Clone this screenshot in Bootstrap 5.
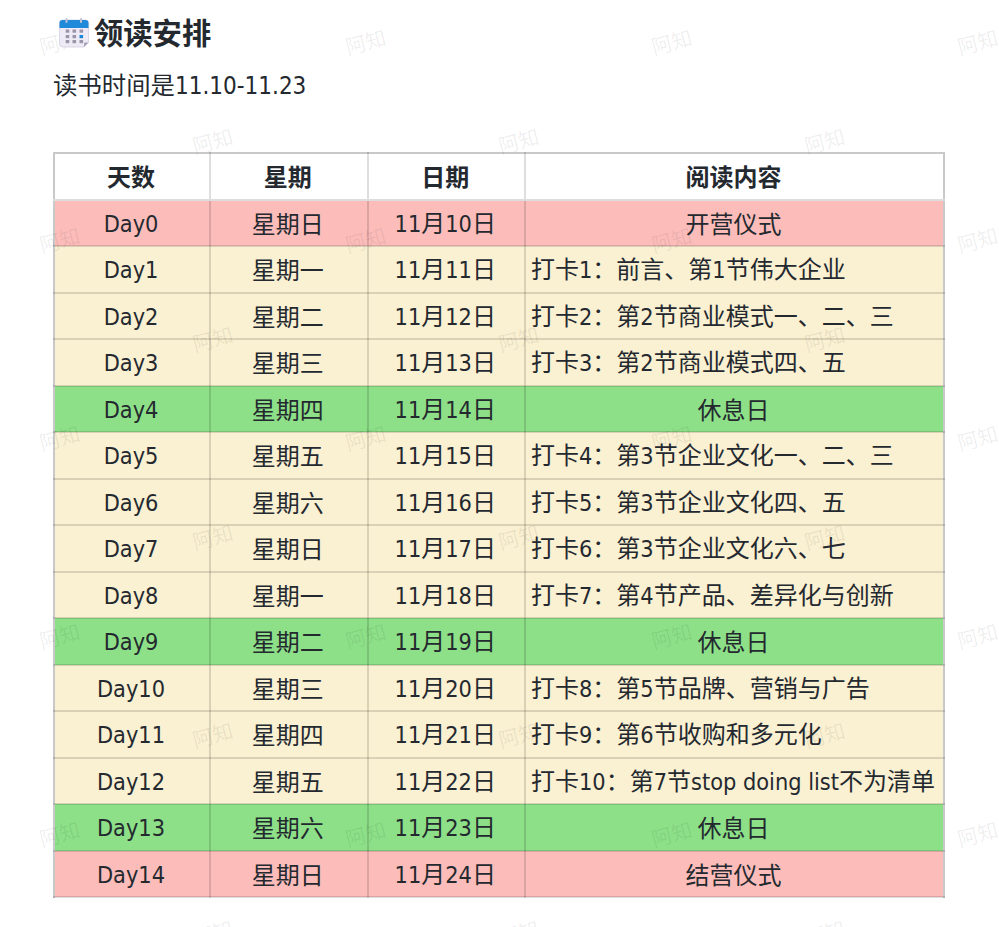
<!DOCTYPE html>
<html lang="zh-CN">
<head>
<meta charset="utf-8">
<title>领读安排</title>
<link rel="stylesheet" href="https://cdn.jsdelivr.net/npm/bootstrap@5.3.0/dist/css/bootstrap.min.css">
<style>
html,body{height:927px;overflow:hidden;background:#fff;}
body{position:relative;font-family:"Noto Sans CJK SC","Noto Sans",sans-serif;color:#24292f;font-size:24px;}
.sheet{padding:11px 55px 0 53px;}
.ttl{font-size:29.3px;line-height:40px;font-weight:700;margin:0;color:#24292f;font-family:"Noto Sans CJK SC","Noto Sans",sans-serif;}
.ttl svg{margin:4px 5px 0 6px;flex:none;position:relative;z-index:2;}
.intro{margin:15px 0 48px 0;line-height:36px;font-size:24.4px;}
.ltn{font-family:"DejaVu Sans Condensed","DejaVu Sans",sans-serif;font-stretch:condensed;font-size:23.3px;}
.intro .ltn{font-size:24px;}
.plan{width:892px;table-layout:fixed;border-collapse:collapse;margin:0;}
.plan th,.plan td{height:46.5px;padding:0 7px 0 5px;vertical-align:middle;text-align:center;line-height:32px;font-size:24px;white-space:nowrap;border:2px solid rgba(0,0,0,.13);color:#24292f;}
.plan th{font-weight:700;background:#fff;border-top-color:#c9c9c9;border-bottom-color:#ddd;}
.plan tr>*:first-child{border-left-color:#c9c9c9;}
.plan tr>*:last-child{border-right-color:#c9c9c9;}
.plan td.lft{text-align:left;}
.c-a{width:156px}.c-b{width:157.5px}.c-c{width:157.5px}
.rp td{background:#fcbdba;}
.ry td{background:#faf0d2;}
.rg td{background:#8de088;}
.wm{position:absolute;inset:0;padding-top:27px;pointer-events:none;overflow:hidden;}
.wmrow{display:flex;height:99px;padding-left:39px;width:1400px;}
.wmrow.alt{padding-left:192px;}
.wmrow span{flex:0 0 306px;font-size:20.500px;line-height:28px;color:rgba(0,0,0,.075);}
.wmrow span i{display:inline-block;font-style:normal;transform:rotate(-15deg);font-family:"Noto Sans CJK SC",sans-serif;}
</style>
</head>
<body>
<div class="sheet">
  <h2 class="ttl d-flex align-items-center">
    <svg width="30" height="30" viewBox="0 0 30 30" aria-hidden="true">
      <path d="M0.500 5a3 3 0 0 1 3-3h23a3 3 0 0 1 3 3v19.500l-4.500 4.500H3.500a3 3 0 0 1-3-3z" fill="#eeebf6" stroke="#c8c2da" stroke-width=".6"/>
      <path d="M0.500 10V5a3 3 0 0 1 3-3h23a3 3 0 0 1 3 3v5z" fill="#1f8ad9"/>
      <path d="M29.500 24.500l-4.500 4.500v-3.500a1 1 0 0 1 1-1z" fill="#a9a2bd"/>
      <rect x="6.500" y="0" width="2" height="5" rx="1" fill="#c3c0cf"/>
      <rect x="21" y="0" width="2" height="5" rx="1" fill="#c3c0cf"/>
      <g fill="#9a95a8">
        <rect x="6.700" y="11.500" width="3.600" height="3.200"/><rect x="13.500" y="11.500" width="3.600" height="3.200"/><rect x="20.500" y="11.500" width="3.600" height="3.200"/>
        <rect x="6.700" y="17" width="3.600" height="3.200"/><rect x="13.500" y="17" width="3.600" height="3.200"/>
        <rect x="6.700" y="22" width="3.600" height="3.200"/><rect x="13.500" y="22" width="3.600" height="3.200"/><rect x="20.500" y="22" width="3.600" height="3.200"/>
      </g>
      <rect x="20.500" y="17" width="3.600" height="3.200" fill="#1d86d8"/>
    </svg>
    <span>领读安排</span>
  </h2>
  <p class="intro">读书时间是<span class="ltn">11.10-11.23</span></p>
  <table class="table plan">
    <colgroup><col class="c-a"><col class="c-b"><col class="c-c"><col></colgroup>
    <thead><tr><th>天数</th><th>星期</th><th>日期</th><th>阅读内容</th></tr></thead>
    <tbody>
      <tr class="rp"><td><span class="ltn">Day0</span></td><td>星期日</td><td><span class="ltn">11</span>月<span class="ltn">10</span>日</td><td>开营仪式</td></tr>
      <tr class="ry"><td><span class="ltn">Day1</span></td><td>星期一</td><td><span class="ltn">11</span>月<span class="ltn">11</span>日</td><td class="lft">打卡<span class="ltn">1</span>：前言、第<span class="ltn">1</span>节伟大企业</td></tr>
      <tr class="ry"><td><span class="ltn">Day2</span></td><td>星期二</td><td><span class="ltn">11</span>月<span class="ltn">12</span>日</td><td class="lft">打卡<span class="ltn">2</span>：第<span class="ltn">2</span>节商业模式一、二、三</td></tr>
      <tr class="ry"><td><span class="ltn">Day3</span></td><td>星期三</td><td><span class="ltn">11</span>月<span class="ltn">13</span>日</td><td class="lft">打卡<span class="ltn">3</span>：第<span class="ltn">2</span>节商业模式四、五</td></tr>
      <tr class="rg"><td><span class="ltn">Day4</span></td><td>星期四</td><td><span class="ltn">11</span>月<span class="ltn">14</span>日</td><td>休息日</td></tr>
      <tr class="ry"><td><span class="ltn">Day5</span></td><td>星期五</td><td><span class="ltn">11</span>月<span class="ltn">15</span>日</td><td class="lft">打卡<span class="ltn">4</span>：第<span class="ltn">3</span>节企业文化一、二、三</td></tr>
      <tr class="ry"><td><span class="ltn">Day6</span></td><td>星期六</td><td><span class="ltn">11</span>月<span class="ltn">16</span>日</td><td class="lft">打卡<span class="ltn">5</span>：第<span class="ltn">3</span>节企业文化四、五</td></tr>
      <tr class="ry"><td><span class="ltn">Day7</span></td><td>星期日</td><td><span class="ltn">11</span>月<span class="ltn">17</span>日</td><td class="lft">打卡<span class="ltn">6</span>：第<span class="ltn">3</span>节企业文化六、七</td></tr>
      <tr class="ry"><td><span class="ltn">Day8</span></td><td>星期一</td><td><span class="ltn">11</span>月<span class="ltn">18</span>日</td><td class="lft">打卡<span class="ltn">7</span>：第<span class="ltn">4</span>节产品、差异化与创新</td></tr>
      <tr class="rg"><td><span class="ltn">Day9</span></td><td>星期二</td><td><span class="ltn">11</span>月<span class="ltn">19</span>日</td><td>休息日</td></tr>
      <tr class="ry"><td><span class="ltn">Day10</span></td><td>星期三</td><td><span class="ltn">11</span>月<span class="ltn">20</span>日</td><td class="lft">打卡<span class="ltn">8</span>：第<span class="ltn">5</span>节品牌、营销与广告</td></tr>
      <tr class="ry"><td><span class="ltn">Day11</span></td><td>星期四</td><td><span class="ltn">11</span>月<span class="ltn">21</span>日</td><td class="lft">打卡<span class="ltn">9</span>：第<span class="ltn">6</span>节收购和多元化</td></tr>
      <tr class="ry"><td><span class="ltn">Day12</span></td><td>星期五</td><td><span class="ltn">11</span>月<span class="ltn">22</span>日</td><td class="lft">打卡<span class="ltn">10</span>：第<span class="ltn">7</span>节<span class="ltn">stop doing list</span>不为清单</td></tr>
      <tr class="rg"><td><span class="ltn">Day13</span></td><td>星期六</td><td><span class="ltn">11</span>月<span class="ltn">23</span>日</td><td>休息日</td></tr>
      <tr class="rp"><td><span class="ltn">Day14</span></td><td>星期日</td><td><span class="ltn">11</span>月<span class="ltn">24</span>日</td><td>结营仪式</td></tr>
    </tbody>
  </table>
</div>
<div class="wm" aria-hidden="true">
  <div class="wmrow"><span><i>阿知</i></span><span><i>阿知</i></span><span><i>阿知</i></span><span><i>阿知</i></span></div>
  <div class="wmrow alt"><span><i>阿知</i></span><span><i>阿知</i></span><span><i>阿知</i></span></div>
  <div class="wmrow"><span><i>阿知</i></span><span><i>阿知</i></span><span><i>阿知</i></span><span><i>阿知</i></span></div>
  <div class="wmrow alt"><span><i>阿知</i></span><span><i>阿知</i></span><span><i>阿知</i></span></div>
  <div class="wmrow"><span><i>阿知</i></span><span><i>阿知</i></span><span><i>阿知</i></span><span><i>阿知</i></span></div>
  <div class="wmrow alt"><span><i>阿知</i></span><span><i>阿知</i></span><span><i>阿知</i></span></div>
  <div class="wmrow"><span><i>阿知</i></span><span><i>阿知</i></span><span><i>阿知</i></span><span><i>阿知</i></span></div>
  <div class="wmrow alt"><span><i>阿知</i></span><span><i>阿知</i></span><span><i>阿知</i></span></div>
  <div class="wmrow"><span><i>阿知</i></span><span><i>阿知</i></span><span><i>阿知</i></span><span><i>阿知</i></span></div>
  <div class="wmrow alt"><span><i>阿知</i></span><span><i>阿知</i></span><span><i>阿知</i></span></div>
</div>
</body>
</html>
